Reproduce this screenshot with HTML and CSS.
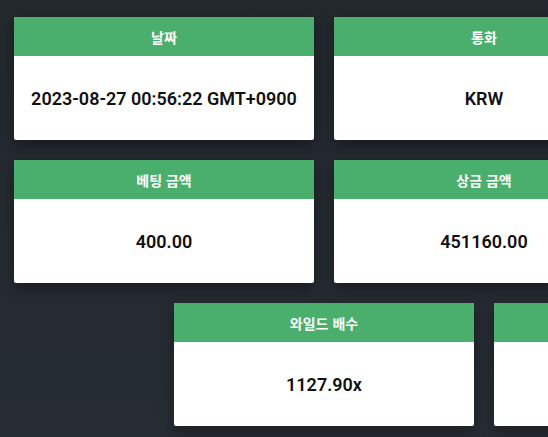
FILE: index.html
```html
<!DOCTYPE html>
<html lang="ko">
<head>
<meta charset="utf-8">
<title>Bet details</title>
<link rel="stylesheet" href="styles.css">
</head>
<body>
<div class="grid">
  <div class="card"><div class="card-head">날짜</div><div class="card-body">2023-08-27 00:56:22 GMT+0900</div></div>
  <div class="card"><div class="card-head">통화</div><div class="card-body">KRW</div></div>
  <div class="card"><div class="card-head">게임</div><div class="card-body">Crazy Time</div></div>
  <div class="card"><div class="card-head">베팅 금액</div><div class="card-body">400.00</div></div>
  <div class="card"><div class="card-head">상금 금액</div><div class="card-body">451160.00</div></div>
  <div class="card"><div class="card-head">배수</div><div class="card-body">1127.90x</div></div>
  <div class="card"><div class="card-head">와일드 배수</div><div class="card-body">1127.90x</div></div>
  <div class="card"><div class="card-head">결과</div><div class="card-body">WIN</div></div>
</div>
</body>
</html>
```
FILE: styles.css
```css
html, body {
  margin: 0;
  padding: 0;
  overflow: hidden;
}
body {
  width: 548px;
  height: 437px;
  background: linear-gradient(to bottom, #23282d 0%, #262d33 100%);
  font-family: Roboto, "Noto Sans CJK KR", sans-serif;
}
.grid {
  width: 968px;
  display: flex;
  flex-wrap: wrap;
  justify-content: center;
  gap: 20px;
  padding-top: 17px;
}
.card {
  width: 300px;
  height: 123px;
  background: #fff;
  border-radius: 2px;
  overflow: hidden;
  box-shadow: 0 6px 14px rgba(0, 0, 0, 0.35);
  display: flex;
  flex-direction: column;
}
.card-head {
  height: 39px;
  background: #4aaf6c;
  color: #fff;
  font-family: "Noto Sans CJK KR", sans-serif;
  font-weight: 700;
  font-size: 14px;
  display: flex;
  align-items: center;
  justify-content: center;
}
.card-body {
  flex: 1;
  display: flex;
  align-items: center;
  justify-content: center;
  color: #111;
  font-weight: 600;
  font-size: 18px;
}
```
